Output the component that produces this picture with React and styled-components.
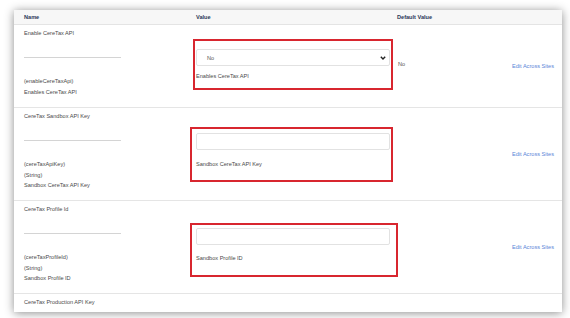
import React from 'react'
import styled, { createGlobalStyle } from 'styled-components'

const GlobalStyle = createGlobalStyle`
  html, body {
    margin: 0;
    padding: 0;
    background: #ffffff;
  }
  body {
    font-family: 'Liberation Sans', Arial, sans-serif;
    width: 570px;
    height: 318px;
    overflow: hidden;
  }
`

const Page = styled.div`
  padding: 10px 8px 6px 14px;
  height: 318px;
  box-sizing: border-box;
`

const Card = styled.div`
  background: #ffffff;
  height: 100%;
  overflow: hidden;
  box-shadow: 0 1px 9px rgba(0, 0, 0, 0.45);
`

const Grid = styled.div`
  display: grid;
  grid-template-columns: 176px 207px 115px 1fr;
`

const HeadCell = styled.div`
  background: #f7f7f7;
  height: 14px;
  line-height: 14px;
  font-size: 5.6px;
  font-weight: bold;
  color: #2a3858;
  border-bottom: 1px solid #e4e4e4;
  padding-left: ${p => p.$pad || 0}px;
`

const Row = styled.div`
  display: contents;
`

const Cell = styled.div`
  border-bottom: 1px solid #e5e5e5;
  height: ${p => p.$height}px;
  box-sizing: border-box;
  font-size: 5.6px;
  color: #4a4a4a;
  display: flex;
  flex-direction: column;
  align-items: flex-start;
  justify-content: ${p => (p.$center ? 'center' : 'flex-start')};
  padding-left: ${p => p.$pad || 0}px;
`

const NameTitle = styled.div`
  margin-top: 3px;
  line-height: 10px;
`

const Rule = styled.div`
  width: 97px;
  height: 1px;
  background: #d4d4d4;
  margin: 19px 0 18px;
`

const Meta = styled.div`
  line-height: 10.5px;
`

const Highlight = styled.div`
  margin-top: ${p => p.$top}px;
  margin-left: ${p => p.$left}px;
  width: ${p => p.$width}px;
  height: ${p => p.$boxHeight}px;
  box-sizing: border-box;
  border: 2px solid #d8262f;
  padding: ${p => p.$padTop}px 0 0 ${p => p.$padLeft}px;
`

const Select = styled.div`
  width: 194px;
  height: 17px;
  box-sizing: border-box;
  border: 1px solid #e2e2e2;
  border-radius: 2px;
  display: flex;
  align-items: center;
  justify-content: space-between;
  padding: 0 3px 0 10px;
  font-size: 5.6px;
  color: #555;
`

const Input = styled.div`
  width: 194px;
  height: 17px;
  box-sizing: border-box;
  border: 1px solid #e2e2e2;
  border-radius: 2px;
  background: #fff;
`

const Help = styled.div`
  margin-top: ${p => p.$gap}px;
  line-height: 10px;
  color: #4a4a4a;
`

const DefaultText = styled.div`
  padding: 0 0 ${p => p.$nudge || 0}px 1px;
  color: #555;
`

const EditLink = styled.a`
  color: #5a86d8;
  text-decoration: none;
  cursor: pointer;
`

const Chevron = () => (
  <svg width="6" height="4" viewBox="0 0 6 4">
    <path d="M0.8 0.8 L3 3 L5.2 0.8" fill="none" stroke="#222" strokeWidth="1.4" />
  </svg>
)

export default function App() {
  return (
    <>
      <GlobalStyle />
      <Page>
        <Card>
          <Grid>
            <HeadCell $pad={10}>Name</HeadCell>
            <HeadCell $pad={6}>Value</HeadCell>
            <HeadCell>Default Value</HeadCell>
            <HeadCell />

            <Row>
              <Cell $height={83} $pad={10}>
                <NameTitle>Enable CereTax API</NameTitle>
                <Rule />
                <Meta>(enableCereTaxApi)</Meta>
                <Meta>Enables CereTax API</Meta>
              </Cell>
              <Cell $height={83}>
                <Highlight $top={14} $left={3} $width={200} $boxHeight={51} $padTop={8} $padLeft={1}>
                  <Select>
                    <span>No</span>
                    <Chevron />
                  </Select>
                  <Help $gap={5}>Enables CereTax API</Help>
                </Highlight>
              </Cell>
              <Cell $height={83} $center>
                <DefaultText $nudge={4}>No</DefaultText>
              </Cell>
              <Cell $height={83} $center>
                <EditLink>Edit Across Sites</EditLink>
              </Cell>
            </Row>

            <Row>
              <Cell $height={93} $pad={10}>
                <NameTitle>CereTax Sandbox API Key</NameTitle>
                <Rule />
                <Meta>(cereTaxApiKey)</Meta>
                <Meta>(String)</Meta>
                <Meta>Sandbox CereTax API Key</Meta>
              </Cell>
              <Cell $height={93}>
                <Highlight $top={19} $left={0} $width={203} $boxHeight={55} $padTop={4} $padLeft={4}>
                  <Input />
                  <Help $gap={9}>Sandbox CereTax API Key</Help>
                </Highlight>
              </Cell>
              <Cell $height={93} $center />
              <Cell $height={93} $center>
                <EditLink>Edit Across Sites</EditLink>
              </Cell>
            </Row>

            <Row>
              <Cell $height={93} $pad={10}>
                <NameTitle>CereTax Profile Id</NameTitle>
                <Rule />
                <Meta>(cereTaxProfileId)</Meta>
                <Meta>(String)</Meta>
                <Meta>Sandbox Profile ID</Meta>
              </Cell>
              <Cell $height={93}>
                <Highlight $top={22} $left={0} $width={208} $boxHeight={54} $padTop={3} $padLeft={4}>
                  <Input />
                  <Help $gap={8}>Sandbox Profile ID</Help>
                </Highlight>
              </Cell>
              <Cell $height={93} $center />
              <Cell $height={93} $center>
                <EditLink>Edit Across Sites</EditLink>
              </Cell>
            </Row>

            <Row>
              <Cell $height={24} $pad={10}>
                <NameTitle>CereTax Production API Key</NameTitle>
              </Cell>
              <Cell $height={24} />
              <Cell $height={24} />
              <Cell $height={24} />
            </Row>
          </Grid>
        </Card>
      </Page>
    </>
  )
}
